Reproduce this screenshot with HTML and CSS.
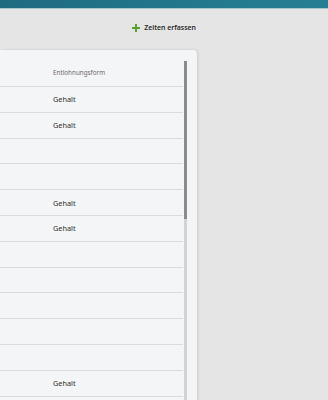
FILE: index.html
```html
<!DOCTYPE html>
<html lang="de">
<head>
<meta charset="utf-8">
<link rel="stylesheet" href="styles.css">
</head>
<body>
<header class="topbar"></header>
<div class="toolbar">
  <button class="add-btn" type="button">
    <svg class="plus" width="8" height="8" viewBox="0 0 8 8" aria-hidden="true">
      <path d="M3 0h2v3h3v2H5v3H3V5H0V3h3z" fill="#5aa02c"/>
    </svg>
    <span>Zeiten erfassen</span>
  </button>
</div>
<section class="card">
  <div class="table">
    <div class="row head"><span class="cell">Entlohnungsform</span></div>
    <div class="row"><span class="cell">Gehalt</span></div>
    <div class="row"><span class="cell">Gehalt</span></div>
    <div class="row"><span class="cell"></span></div>
    <div class="row"><span class="cell"></span></div>
    <div class="row"><span class="cell">Gehalt</span></div>
    <div class="row"><span class="cell">Gehalt</span></div>
    <div class="row"><span class="cell"></span></div>
    <div class="row"><span class="cell"></span></div>
    <div class="row"><span class="cell"></span></div>
    <div class="row"><span class="cell"></span></div>
    <div class="row"><span class="cell"></span></div>
    <div class="row"><span class="cell">Gehalt</span></div>
  </div>
  <div class="scrollbar"><div class="thumb"></div></div>
</section>
</body>
</html>
```
FILE: styles.css
```css
html, body {
  margin: 0;
  padding: 0;
}
body {
  background: #e5e5e5;
  font-family: "Noto Sans", "Open Sans", sans-serif;
  color: #333;
  overflow: hidden;
  height: 400px;
}
.topbar {
  height: 8px;
  background: linear-gradient(90deg, #1e6b80 0%, #23788d 60%, #277f93 100%);
  border-bottom: 1px solid #a9c4ca;
}
.toolbar {
  display: flex;
  justify-content: flex-end;
  width: 197px;
  height: 41px;
  align-items: flex-start;
}
.add-btn {
  margin-top: 14px;
  display: flex;
  align-items: center;
  gap: 4px;
  background: none;
  border: 0;
  padding: 0 1px 0 0;
  font-family: inherit;
  font-size: 6.9px;
  font-weight: 600;
  color: #2b2b2b;
}
.plus {
  display: block;
}
.card {
  width: 197px;
  height: 351px;
  background: #f4f5f7;
  border-radius: 0 4px 0 0;
  box-shadow: 1px 0 3px rgba(0,0,0,0.12);
  display: flex;
  align-items: flex-start;
}
.table {
  width: 183px;
}
.row {
  height: 24.8px;
  border-bottom: 1px solid #d9dbde;
  display: flex;
  align-items: center;
}
.row.head {
  height: 36px;
  align-items: flex-end;
}
.row.head .cell {
  font-size: 6.3px;
  color: #6a6a6a;
  padding-bottom: 9px;
}
.cell {
  padding-left: 53px;
  font-size: 7.3px;
  color: #2e2e2e;
}
.scrollbar {
  width: 3px;
  margin-left: 1px;
  margin-top: 11px;
  height: 340px;
  background: #d3d3d3;
}
.thumb {
  height: 158px;
  background: #8b8b8b;
}
```
